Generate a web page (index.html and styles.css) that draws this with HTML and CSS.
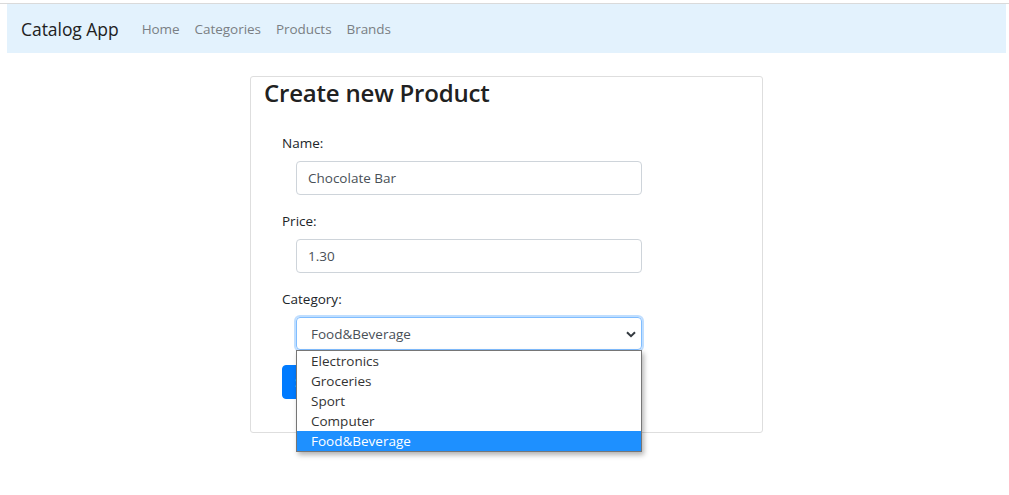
FILE: index.html
```html
<!DOCTYPE html>
<html lang="en">
<head>
<meta charset="utf-8">
<title>Catalog App</title>
<link rel="stylesheet" href="styles.css">
</head>
<body>
<div class="topline"></div>
<nav class="navbar">
  <span class="brand">Catalog App</span>
  <a class="nav-link" href="#">Home</a>
  <a class="nav-link" href="#">Categories</a>
  <a class="nav-link" href="#">Products</a>
  <a class="nav-link" href="#">Brands</a>
</nav>
<main class="card">
  <h3 class="title">Create new Product</h3>
  <form class="form">
    <label class="label">Name:</label>
    <div class="control">Chocolate Bar</div>
    <label class="label">Price:</label>
    <div class="control">1.30</div>
    <label class="label">Category:</label>
    <div class="select-wrap">
      <div class="control select">Food&amp;Beverage
        <svg class="chev" width="10" height="7" viewBox="0 0 10 7"><path d="M1 1.2 L5 5.2 L9 1.2" fill="none" stroke="#343a40" stroke-width="2"/></svg>
      </div>
      <ul class="dropdown">
        <li>Electronics</li>
        <li>Groceries</li>
        <li>Sport</li>
        <li>Computer</li>
        <li class="sel">Food&amp;Beverage</li>
      </ul>
    </div>
    <button class="btn" type="button">Submit</button>
  </form>
</main>
</body>
</html>
```
FILE: styles.css
```css
* { box-sizing: border-box; }
html, body { min-height: 100%; }
body {
  margin: 0;
  min-height: 495px;
  font-family: "Open Sans", "Noto Sans", sans-serif;
  color: #212529;
  background: #fff;
}
.topline {
  height: 4px;
  border-bottom: 1px solid #dadada;
}
.navbar {
  margin: 0 3px 0 7px;
  height: 49px;
  background: #e3f2fd;
  display: flex;
  align-items: center;
  padding-left: 14px;
}
.brand {
  font-size: 17.5px;
  color: #212121;
  margin-right: 23px;
  letter-spacing: -0.05px;
}
.nav-link {
  font-size: 13.5px;
  color: #7a7f84;
  text-decoration: none;
  margin-right: 15px;
  letter-spacing: -0.05px;
}
.card {
  width: 513px;
  margin: 23px 0 0 250px;
  border: 1px solid #dedede;
  border-radius: 3px;
  padding: 0 0 33px 0;
}
.title {
  margin: 0;
  padding: 0 13px;
  font-size: 24px;
  font-weight: 600;
  line-height: 32px;
  color: #212121;
  letter-spacing: -0.2px;
}
.form {
  display: flex;
  flex-direction: column;
  align-items: flex-start;
  padding: 24px 0 0 31px;
}
.label {
  font-size: 13.5px;
  line-height: 20px;
  color: #212529;
  margin-bottom: 8px;
}
.control {
  margin-left: 14px;
  width: 346px;
  height: 34px;
  border: 1px solid #ced4da;
  border-radius: 4px;
  padding: 0 11px;
  font-size: 13.5px;
  line-height: 32px;
  color: #495057;
  margin-bottom: 16px;
}
.select-wrap {
  position: relative;
  margin-bottom: 15px;
}
.select {
  margin-bottom: 0;
  height: 33px;
  line-height: 32px;
  padding-left: 14px;
  position: relative;
  border-color: #80bdff;
  box-shadow: 0 0 0 2px rgba(0, 123, 255, 0.25);
}
.chev {
  position: absolute;
  right: 5px;
  top: 13px;
}
.dropdown {
  position: absolute;
  left: 14px;
  top: 33px;
  width: 346px;
  margin: 0;
  padding: 0;
  list-style: none;
  background: #fff;
  border: 1px solid #767676;
  box-shadow: 2px 3px 5px rgba(0, 0, 0, 0.3);
  z-index: 2;
}
.dropdown li {
  height: 20px;
  line-height: 20px;
  padding-left: 14px;
  font-size: 13.5px;
  color: #333;
}
.dropdown li.sel {
  background: #1e90ff;
  color: #fff;
}
.btn {
  height: 34px;
  width: 70px;
  background: #007bff;
  border: 1px solid #007bff;
  border-radius: 4px;
  color: #fff;
  font-family: inherit;
  font-size: 13.5px;
  text-align: left;
  padding-left: 12px;
}
```
